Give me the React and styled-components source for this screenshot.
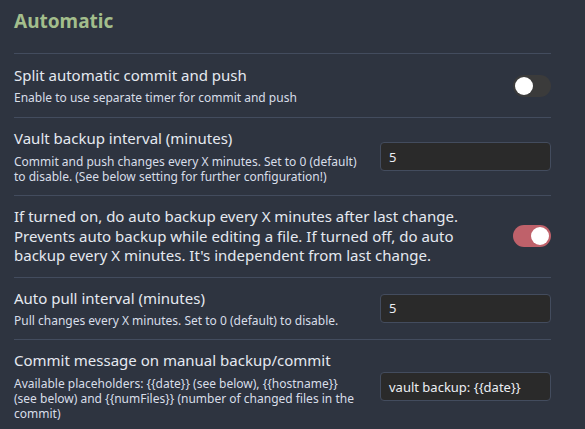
import React from "react";
import styled, { createGlobalStyle } from "styled-components";

const Global = createGlobalStyle`
  html, body { margin: 0; padding: 0; background: #2e3440; }
  body { font-family: "Noto Sans", "Open Sans", sans-serif; color: #e5e9f0; }
`;

const Page = styled.div`
  width: 585px;
  height: 429px;
  overflow: hidden;
  background: #2e3440;
  padding: 0 34px 0 14px;
  box-sizing: border-box;
`;

const Heading = styled.h3`
  margin: 0;
  padding: 5px 0 16px;
  font-size: 19px;
  line-height: 32px;
  font-weight: 700;
  color: #a3be8c;
`;

const Item = styled.div`
  display: flex;
  align-items: center;
  border-top: 1px solid #434c5e;
  padding: 11px 0;
  min-height: ${(p) => p.$min || 0}px;
  box-sizing: border-box;
`;

const Info = styled.div`
  flex: 1 1 auto;
  margin-right: ${(p) => p.$gap || 18}px;
  min-width: 0;
`;

const Name = styled.div`
  font-size: 15px;
  line-height: 19.5px;
  color: #e5e9f0;
`;

const Desc = styled.div`
  font-size: 12px;
  line-height: 15.3px;
  padding-top: 5px;
  color: #d8dee9;
`;

const Control = styled.div`
  flex: 0 0 auto;
  display: flex;
  align-items: center;
`;

const Toggle = styled.div`
  width: 38px;
  height: 22px;
  border-radius: 11px;
  background: ${(p) => (p.$on ? "#bf616a" : "#3b3b3b")};
  position: relative;
  &::after {
    content: "";
    position: absolute;
    top: 2px;
    left: ${(p) => (p.$on ? 18 : 2)}px;
    width: 18px;
    height: 18px;
    border-radius: 50%;
    background: #ffffff;
  }
`;

const Input = styled.div`
  width: 171px;
  height: 29px;
  box-sizing: border-box;
  background: #2a2a2a;
  border: 1px solid #434c5e;
  border-radius: 4px;
  padding: 0 8px;
  display: flex;
  align-items: center;
  font-size: 13px;
  color: #eceff4;
`;

export default function App() {
  return (
    <>
      <Global />
      <Page>
        <Heading>Automatic</Heading>
        <Item $min={64}>
          <Info>
            <Name>Split automatic commit and push</Name>
            <Desc>Enable to use separate timer for commit and push</Desc>
          </Info>
          <Control>
            <Toggle />
          </Control>
        </Item>
        <Item>
          <Info>
            <Name>Vault backup interval (minutes)</Name>
            <Desc>
              Commit and push changes every X minutes. Set to 0 (default) to disable. (See below setting for further configuration!)
            </Desc>
          </Info>
          <Control>
            <Input>5</Input>
          </Control>
        </Item>
        <Item>
          <Info>
            <Name>
              If turned on, do auto backup every X minutes after last change. Prevents auto backup while editing a file. If turned off, do auto backup every X minutes. It's independent from last change.
            </Name>
          </Info>
          <Control>
            <Toggle $on />
          </Control>
        </Item>
        <Item>
          <Info>
            <Name>Auto pull interval (minutes)</Name>
            <Desc>Pull changes every X minutes. Set to 0 (default) to disable.</Desc>
          </Info>
          <Control>
            <Input>5</Input>
          </Control>
        </Item>
        <Item>
          <Info>
            <Name>Commit message on manual backup/commit</Name>
            <Desc>
              Available placeholders: {"{{date}}"} (see below), {"{{hostname}}"} (see below) and {"{{numFiles}}"} (number of changed files in the commit)
            </Desc>
          </Info>
          <Control>
            <Input>vault backup: {"{{date}}"}</Input>
          </Control>
        </Item>
      </Page>
    </>
  );
}
